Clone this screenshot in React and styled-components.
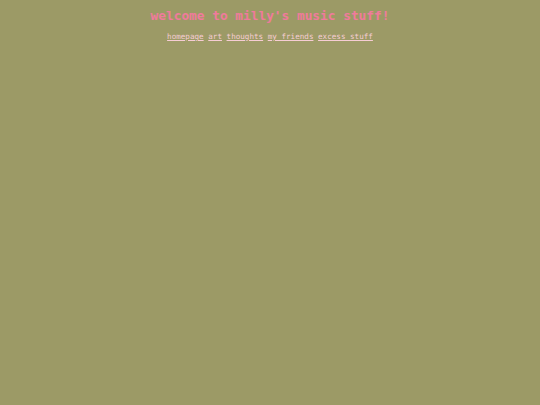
import React from 'react';
import styled, { createGlobalStyle } from 'styled-components';

const GlobalStyle = createGlobalStyle`
  html, body {
    margin: 0;
    padding: 0;
    background: #9c9a66;
    min-height: 100%;
  }
  body {
    font-family: "DejaVu Sans Mono", monospace;
  }
`;

const Header = styled.header`
  display: flex;
  flex-direction: column;
  align-items: center;
  padding-top: 8px;
`;

const Title = styled.h1`
  margin: 0;
  font-size: 12.8px;
  line-height: 16px;
  font-weight: bold;
  color: #f07a9c;
`;

const Nav = styled.nav`
  display: flex;
  gap: 4.6px;
  margin-top: 8px;
  font-size: 7.6px;
  line-height: 10px;
`;

const NavLink = styled.a`
  color: #f6cdd4;
  text-decoration: underline;
`;

const links = ['homepage', 'art', 'thoughts', 'my friends', 'excess stuff'];

function App() {
  return (
    <>
      <GlobalStyle />
      <Header>
        <Title>welcome to milly's music stuff!</Title>
        <Nav>
          {links.map((l) => (
            <NavLink key={l} href="#">{l}</NavLink>
          ))}
        </Nav>
      </Header>
    </>
  );
}

export default App;
